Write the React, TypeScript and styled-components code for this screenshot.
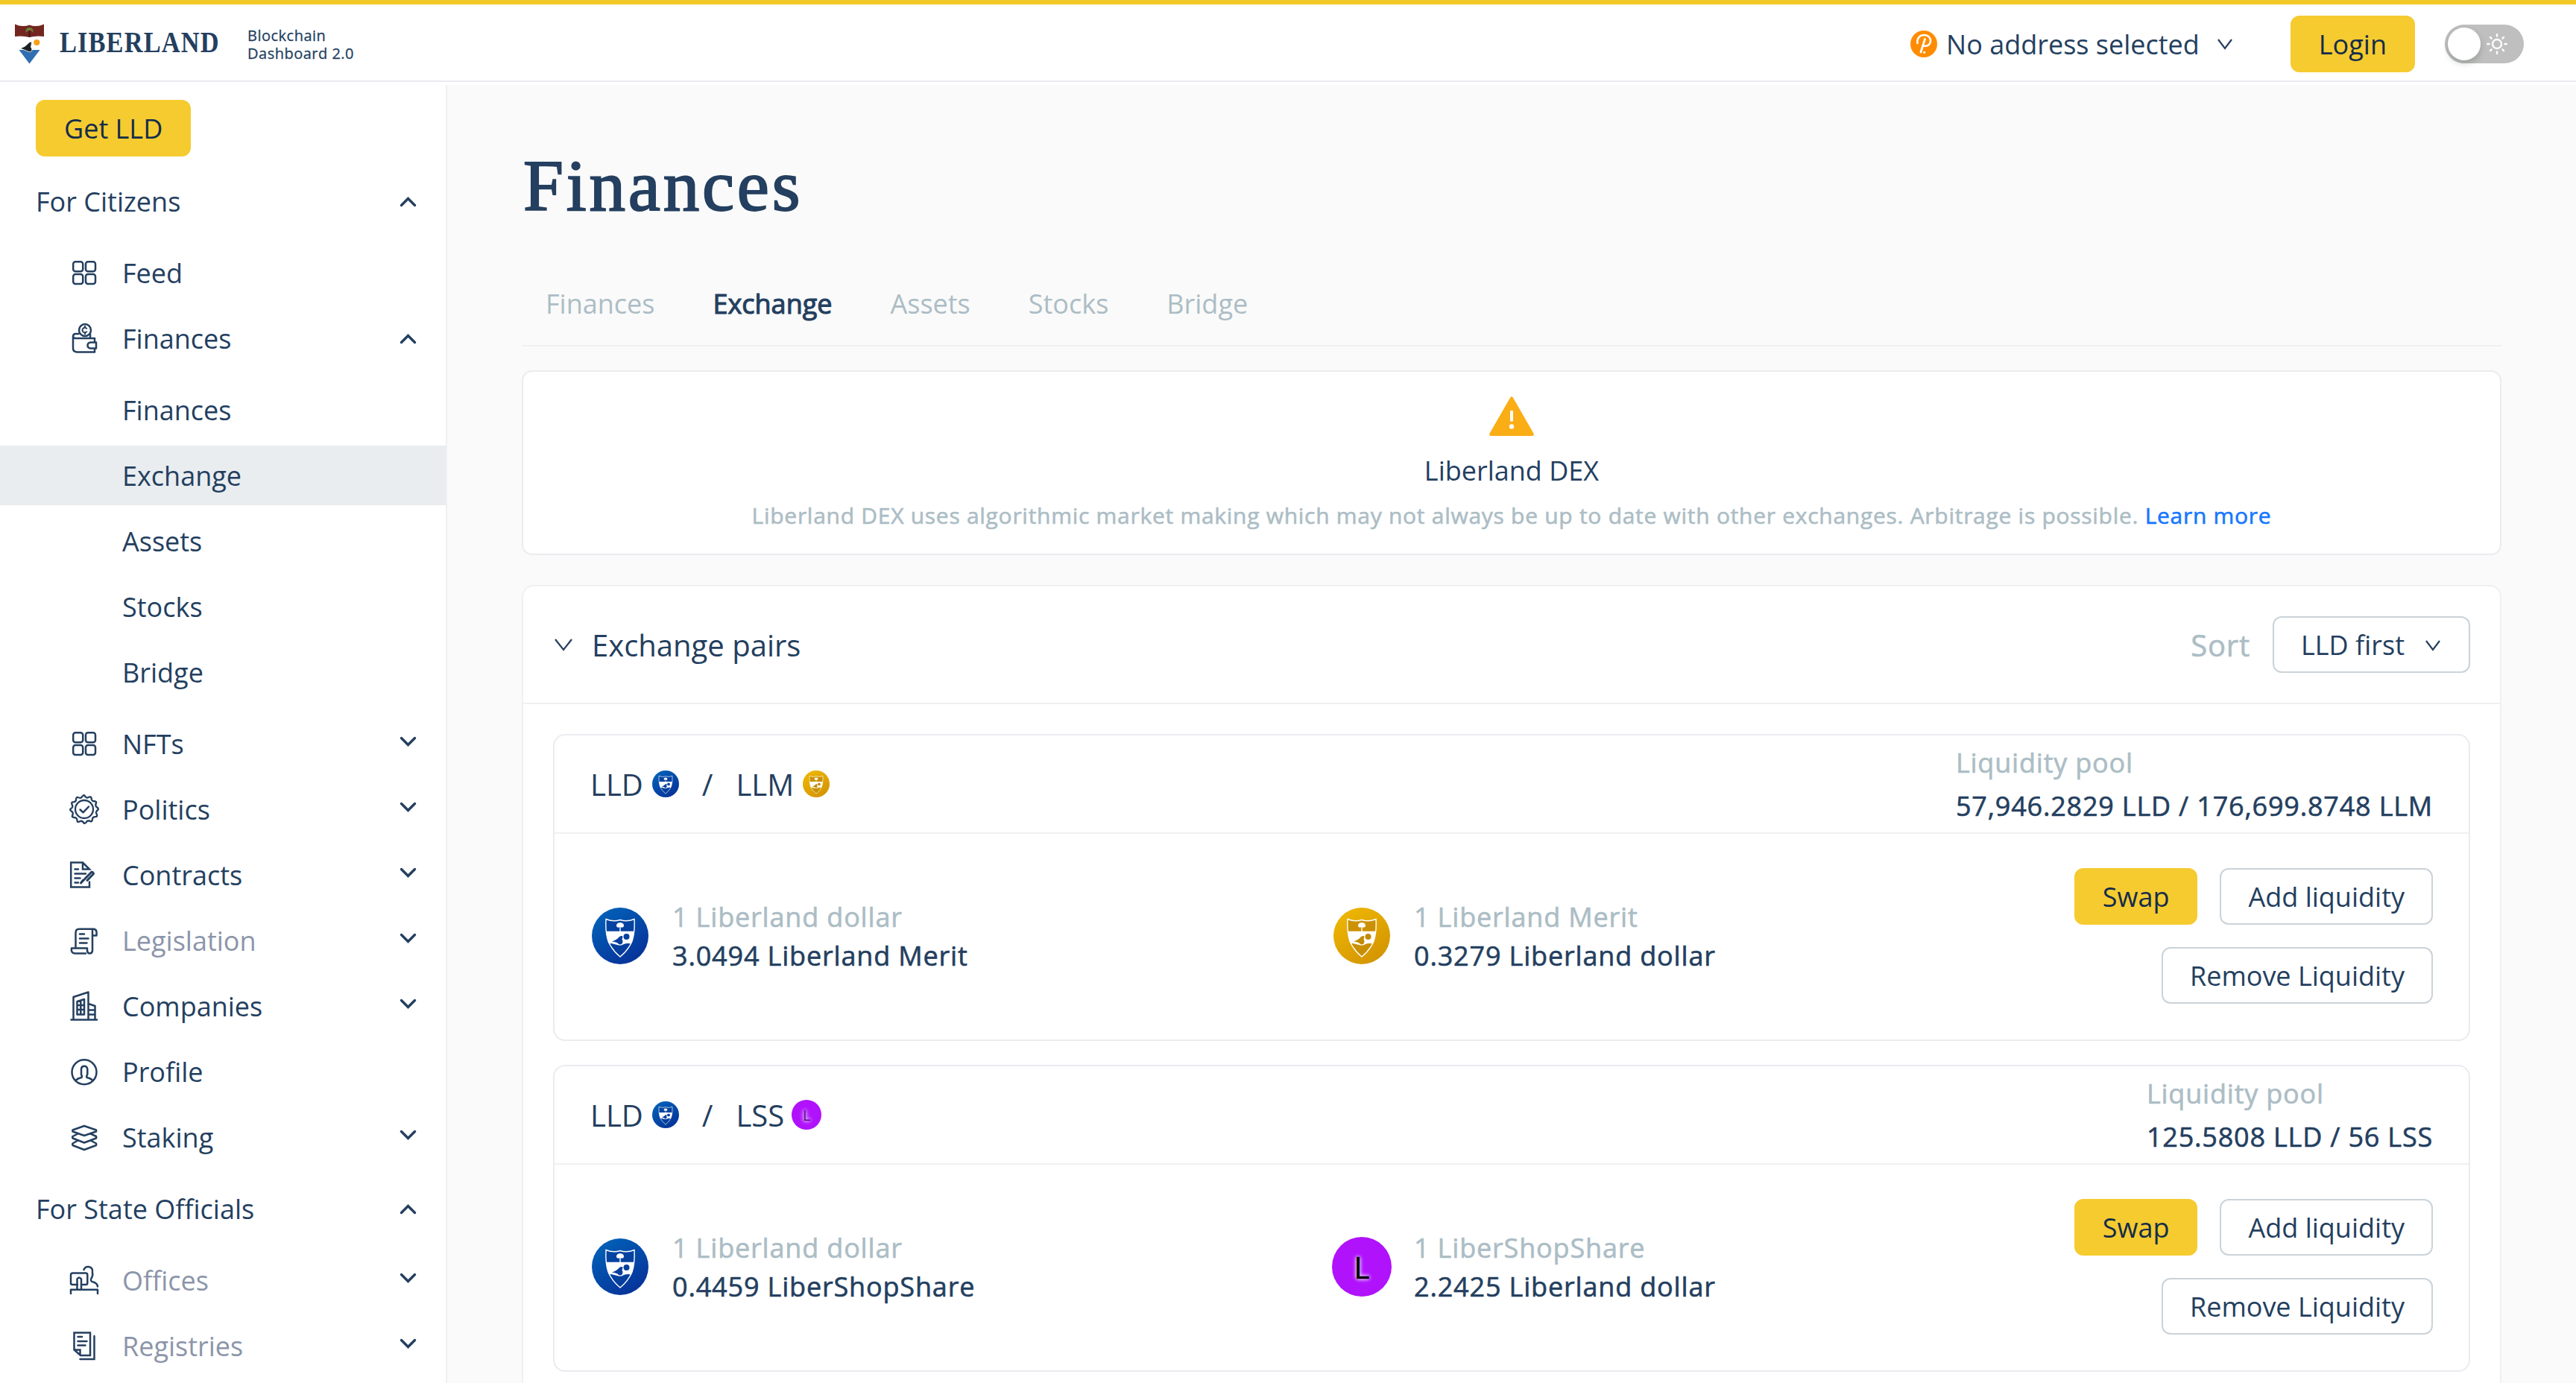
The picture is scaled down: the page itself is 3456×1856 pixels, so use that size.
import React from "react";
import styled, { createGlobalStyle, css } from "styled-components";

const ink = "#243f5f";
const muted = "#acbdc5";
const yellow = "#f5cb30";
const line = "#ebebf0";
const softLine = "#f0f0f0";

const GlobalStyle = createGlobalStyle`
  *, *::before, *::after { box-sizing: border-box; }
  body {
    margin: 0;
    background: #fff;
    color: ${ink};
    font-family: "Open Sans", "Noto Sans", sans-serif;
    font-size: 36px;
    overflow: hidden;
  }
  button { font-family: inherit; cursor: pointer; }
`;

/* Open Sans ships without a medium cut, so the regular one is thickened. */
const medium = css`
  font-weight: 400;
  -webkit-text-stroke: 0.6px currentColor;
`;

const Page = styled.div`
  width: 3456px;
  height: 1856px;
  overflow: hidden;
  display: flex;
  flex-direction: column;
  background: #fff;
`;

/* ---------- header ---------- */

const Header = styled.header`
  flex: none;
  height: 110px;
  border-top: 6px solid #f2ca27;
  border-bottom: 2px solid ${line};
  padding: 4px 70px 0 20px;
  display: flex;
  align-items: center;
  background: #fff;
`;

const Brand = styled.div`
  display: flex;
  align-items: center;
  flex: 1;
`;

const WordmarkSvg = styled.svg`
  margin-left: 20px;
  overflow: visible;
`;

const Tagline = styled.div`
  margin-left: 28px;
  padding-top: 2px;
  font-size: 20px;
  line-height: 24px;
  letter-spacing: 0.5px;
  -webkit-text-stroke: 0.3px currentColor;
`;

const AddressPicker = styled.div`
  display: flex;
  align-items: center;
  gap: 12px;
  margin-right: 78px;
  line-height: 76px;
  svg:last-child { margin-left: 12px; }
`;

const AddressText = styled.span`
  padding-top: 2px;
`;

const Toggle = styled.div`
  margin-left: 40px;
  width: 106px;
  height: 52px;
  border-radius: 26px;
  background: #bfbfbf;
  padding: 4px 22px 4px 4px;
  display: flex;
  align-items: center;
  justify-content: space-between;
`;

const Knob = styled.div`
  width: 44px;
  height: 44px;
  border-radius: 50%;
  background: #fff;
  box-shadow: 0 4px 8px rgba(0, 35, 11, 0.2);
`;

const Button = styled.button<{ $primary?: boolean }>`
  height: 76px;
  padding: 2px 36px 0;
  border: 2px solid #cad3d9;
  border-radius: 12px;
  background: #fff;
  color: ${ink};
  font-size: 36px;
  line-height: 70px;
  display: inline-flex;
  align-items: center;
  justify-content: center;
  white-space: nowrap;
  ${(p) =>
    p.$primary &&
    css`
      background: ${yellow};
      border-color: ${yellow};
      color: #142c4a;
    `}
`;

/* ---------- layout ---------- */

const Body = styled.div`
  flex: 1;
  min-height: 0;
  padding-top: 4px;
  display: flex;
`;

const Sidebar = styled.aside`
  flex: none;
  width: 600px;
  border-right: 2px solid ${softLine};
  background: #fff;
  overflow: hidden;
`;

const SidebarTop = styled.div`
  padding: 20px 48px;
  display: flex;
`;

const MenuList = styled.ul<{ $nested?: boolean }>`
  list-style: none;
  margin: 0;
  padding: 0;
  display: flex;
  flex-direction: column;
  gap: 8px;
  ${(p) => p.$nested && css`padding: 16px 0 8px;`}
`;

const MenuRow = styled.div<{ $level: number; $active?: boolean }>`
  height: 80px;
  display: flex;
  align-items: center;
  padding-right: 40px;
  padding-left: ${(p) => (p.$level === 0 ? 48 : p.$level === 1 ? 93 : 164)}px;
  background: ${(p) => (p.$active ? "#e9edf0" : "transparent")};
`;

const MenuLabel = styled.span<{ $dim?: boolean }>`
  flex: 1;
  white-space: nowrap;
  color: ${(p) => (p.$dim ? "#8c95a9" : ink)};
`;

const MenuIcon = styled.svg`
  flex: none;
  width: 40px;
  height: 40px;
  margin-right: 31px;
  overflow: visible;
  fill: none;
  stroke: ${ink};
  stroke-width: 2.5;
  stroke-linecap: round;
  stroke-linejoin: round;
`;

const MenuArrow = styled.svg<{ $open?: boolean }>`
  flex: none;
  width: 21px;
  height: 12px;
  overflow: visible;
  margin-top: ${(p) => (p.$open ? "2px" : "-6px")};
  fill: none;
  stroke: ${ink};
  stroke-width: 3.4;
  stroke-linecap: round;
`;

const Main = styled.main`
  flex: 1;
  min-width: 0;
  background: #fafafa;
  padding: 78px 100px 0;
`;

const PageTitle = styled.h1`
  margin: 0 0 42px;
  font-family: "Liberation Serif", "Times New Roman", serif;
  font-weight: 400;
  font-size: 97px;
  line-height: 116px;
  letter-spacing: 3.8px;
  -webkit-text-stroke: 2px ${ink};
  padding-left: 2px;
`;

const Tabs = styled.nav`
  height: 115px;
  border-bottom: 2px solid ${softLine};
  padding: 1px 0 0 32px;
  display: flex;
  align-items: center;
  gap: 78px;
  margin-bottom: 32px;
`;

const Tab = styled.a<{ $active?: boolean }>`
  color: ${(p) => (p.$active ? ink : muted)};
  -webkit-text-stroke: ${(p) => (p.$active ? "1.1px currentColor" : "0")};
`;

const Notice = styled.section`
  border: 2px solid ${line};
  border-radius: 14px;
  background: #fff;
  height: 248px;
  padding-top: 33px;
  margin-bottom: 40px;
  display: flex;
  flex-direction: column;
  align-items: center;
`;

const NoticeTitle = styled.div`
  margin-top: 19px;
  line-height: 56px;
`;

const NoticeText = styled.div`
  ${medium}
  margin-top: 8px;
  font-size: 30px;
  line-height: 48px;
  letter-spacing: 0.72px;
  color: ${muted};
  white-space: nowrap;
`;

const Link = styled.a`
  color: #1677ff;
`;

const Panel = styled.section`
  border: 2px solid ${softLine};
  border-radius: 16px;
  background: #fff;
`;

const PanelHeader = styled.div`
  height: 158px;
  border-bottom: 2px solid ${softLine};
  padding: 0 40px 0 42px;
  display: flex;
  align-items: center;
  font-size: 40px;
`;

const PanelTitle = styled.span`
  flex: 1;
  margin-left: 26px;
`;

const SortLabel = styled.span`
  ${medium}
  color: ${muted};
  letter-spacing: 0.8px;
  margin-right: 30px;
`;

const SortValue = styled.span`
  margin-right: 28px;
`;

const SortButton = styled(Button)`
  padding-right: 38px;
`;

const PairList = styled.div`
  padding: 40px;
  display: flex;
  flex-direction: column;
  gap: 32px;
`;

const PairCard = styled.article`
  height: 412px;
  border: 2px solid ${line};
  border-radius: 16px;
`;

const PairHeader = styled.div`
  height: 132px;
  border-bottom: 2px solid ${softLine};
  padding: 0 48px;
  display: flex;
  align-items: center;
  justify-content: space-between;
`;

const PairNames = styled.div`
  display: flex;
  align-items: center;
  font-size: 40px;
`;

const PairName = styled.span<{ $tight?: boolean }>`
  display: flex;
  align-items: center;
  gap: ${(p) => (p.$tight ? 10 : 12)}px;
`;

const Slash = styled.span`
  margin: 0 31px;
`;

const Pool = styled.div`
  ${medium}
  padding-top: 2px;
  line-height: 58px;
  letter-spacing: 0.8px;
`;

const Muted = styled.div`
  color: ${muted};
`;

const PairBody = styled.div`
  height: 274px;
  padding: 0 48px;
  display: flex;
  align-items: center;
`;

const Rate = styled.div`
  ${medium}
  width: 995px;
  display: flex;
  align-items: center;
  gap: 30px;
  line-height: 52px;
  letter-spacing: 0.83px;
`;

const RateText = styled.div`
  padding-top: 2px;
`;

const CoinSlot = styled.div`
  width: 80px;
  height: 80px;
  display: flex;
  align-items: center;
  justify-content: center;
`;

const Actions = styled.div`
  flex: 1;
  display: flex;
  flex-wrap: wrap;
  justify-content: flex-end;
  gap: 30px;
`;

const Letter = styled.div<{ $size: number; $small?: boolean }>`
  width: ${(p) => p.$size}px;
  height: ${(p) => p.$size}px;
  border-radius: 50%;
  background: #b012fb;
  color: ${(p) => (p.$small ? "#5a0a86" : "#000")};
  font-size: ${(p) => (p.$small ? 20 : 40)}px;
  line-height: ${(p) => p.$size + 2}px;
  text-align: center;
  letter-spacing: 0;
  text-shadow: 0 0 4px #fff, 0 0 6px #fff;
`;

/* ---------- drawings ---------- */

const Crest = () => (
  <svg width="40" height="54" viewBox="0 0 40 54">
    <path d="M0 .5Q10 5 19.500 1.500Q29 5 39 .5V17Q29 15.500 19.500 18Q10 15.500 0 17Z" fill="#73261f" />
    <path d="M19.500 18V8" stroke="#2b1a12" strokeWidth="1.600" />
    <path d="M14.500 12Q14 5 19.500 5Q25 5 24.500 12Q22 8 19.500 9Q17 8 14.500 12Z" fill="#5e8a3a" />
    <circle cx="17.500" cy="9.500" r="1" fill="#c33" />
    <circle cx="21.500" cy="8.500" r="1" fill="#c33" />
    <circle cx="29.300" cy="25" r="4.100" fill="#f9a11b" />
    <path d="M5.500 35H33.500L19.500 53.500Z" fill="#2f6fb2" />
    <path d="M7 33Q14 31 18 26Q21 23 22.500 24.500Q22 29 21.500 31Q23 33 23 36Q21 39 17.500 37Q12 34.500 7 33Z" fill="#1c2224" stroke="#fff" strokeWidth=".8" />
  </svg>
);

const Wordmark = () => (
  <WordmarkSvg width="224" height="48" viewBox="0 0 224 48">
    <text
      x="0"
      y="35"
      transform="scale(.85 1)"
      letterSpacing="1.3"
      fontFamily="'Liberation Serif', 'Times New Roman', serif"
      fontWeight="700"
      fontSize="40.500"
      fill={ink}
    >
      LIBERLAND
    </text>
  </WordmarkSvg>
);

const AddressIcon = () => (
  <svg width="36" height="36" viewBox="0 0 36 36">
    <circle cx="18" cy="18" r="18" fill="#ff8c00" />
    <path d="M9.500 17C8.500 10 13 6 18.500 6C24 6 27.500 10 27 14.500C26.500 19 22.500 21.500 18 20.500" fill="none" stroke="#fff" strokeWidth="2.600" strokeLinecap="round" />
    <path d="M19.500 11.500L14 29" stroke="#fff" strokeWidth="2.800" strokeLinecap="round" />
    <circle cx="18.700" cy="29.300" r="1.600" fill="#fff" />
  </svg>
);

const ThinArrow = ({ w = 20, h = 14 }: { w?: number; h?: number }) => (
  <svg width={w} height={h} viewBox={`0 0 ${w} ${h}`} overflow="visible">
    <path d={`M1 1L${w / 2} ${h - 1}L${w - 1} 1`} fill="none" stroke={ink} strokeWidth="2.200" />
  </svg>
);

const Sun = () => (
  <svg width="28" height="28" viewBox="-14 -14 28 28" stroke="#fff" strokeWidth="2.400" strokeLinecap="round" fill="none">
    <circle r="6" />
    {[0, 45, 90, 135, 180, 225, 270, 315].map((a) => (
      <path key={a} d="M0 -10.500V-12.800" transform={`rotate(${a})`} />
    ))}
  </svg>
);

const Warning = () => (
  <svg width="60" height="53" viewBox="0 0 60 53">
    <path d="M28.500 .9Q30 -.6 31.500 .9L59.700 50Q60 52.800 58 53H2Q0 52.800 .3 50Z" fill="#faad14" />
    <rect x="28" y="19" width="4" height="14.500" rx=".6" fill="#fff" />
    <circle cx="30" cy="40.500" r="3.200" fill="#fff" />
  </svg>
);

const ShieldCoin = ({ size, gold }: { size: number; gold?: boolean }) => {
  const id = gold ? "coin-gold" : "coin-blue";
  const mid = gold ? "#c38a06" : "#073f9c";
  return (
    <svg width={size} height={size} viewBox="0 0 76 76">
      <defs>
        <linearGradient id={id} x1="0.150" y1="0" x2="0.850" y2="1">
          <stop offset="0" stopColor={gold ? "#efb805" : "#0163b9"} />
          <stop offset="1" stopColor={gold ? "#d29200" : "#072f97"} />
        </linearGradient>
      </defs>
      <circle cx="38" cy="38" r="38" fill={`url(#${id})`} />
      <path d="M19 15.500Q29 19.500 38 16.500Q47 19.500 57 15.500Q58 33 54 45Q49 57 38 66Q27 57 22 45Q18 33 19 15.500Z" fill={mid} fillOpacity=".75" stroke="#fff" strokeWidth="1.400" />
      <path d="M19.500 31.800H56.500Q56 42 53 48.500Q47 47.500 43 49Q39 52 34 50L26 48L23 48.500Q20 42 19.500 31.800Z" fill="#fff" />
      <path d="M38 32V24" stroke="#fff" strokeWidth="1.400" />
      <path d="M33 25Q32.500 20.500 38 20Q43.500 20.500 43 25Q41.500 28 38 26Q34.500 28 33 25Z" fill="#fff" />
      <circle cx="46.500" cy="39" r="4" fill={mid} />
      <path d="M27 45.500Q34 43 36.500 39.500Q39 37 41.500 38.500L40.500 43Q42.500 45 40.500 48.500Q38 50.500 35.500 48.500Q34 46.500 27 45.500Z" fill={mid} />
    </svg>
  );
};

const icons: Record<string, React.ReactNode> = {
  grid: (
    <>
      <rect x="5.200" y="5.200" width="13" height="13" rx="3" />
      <rect x="22" y="5.200" width="13" height="13" rx="3" />
      <rect x="5.200" y="22" width="13" height="13" rx="3" />
      <rect x="22" y="22" width="13" height="13" rx="3" />
    </>
  ),
  wallet: (
    <>
      <circle cx="21" cy="9" r="8" />
      <path d="M23.300 6.800A3.300 3.300 0 1 0 23.300 11.200M21 3.800V5.500M21 12.500V14.200" strokeWidth="2" />
      <path d="M12.500 14H8Q5 14.500 5 17.500Q5.500 19.800 8 20H34V25M34 34V38.500H10Q5 38 5 33.500V17M28 14.500V19.500" />
      <path d="M36 25.500H28.500Q24.500 26 24.500 29.500Q24.500 33 28.500 33.500H36Z" />
    </>
  ),
  badge: (
    <>
      <path d="M20 1.200Q22.500 5 24.500 4.600Q28 2.800 29.300 3.800Q29.500 8 31.500 9Q35.800 9.200 36.200 10.800Q34.500 15 36 16.500Q39.300 18.700 38.800 20.300Q35.500 23 36 25Q38 28.500 36.500 29.800Q32 30 31.200 32Q31 36.200 29.300 36.500Q25.500 34.800 23.800 36Q21.500 39.500 20 39Q17.500 35.400 15.500 35.800Q12 38 10.700 36.500Q10.500 32 8.500 31.300Q4 31 3.800 29.500Q5.500 25.500 4.300 23.800Q.8 21.500 1.200 20Q5 17.500 4.300 15.500Q2.500 12 3.700 10.600Q8 10.500 8.800 8.500Q9 4 10.700 3.800Q14.500 5.500 16.200 4.300Q18.500 1 20 1.200Z" strokeWidth="2.300" />
      <circle cx="20" cy="20" r="12" strokeWidth="2.300" />
      <path d="M14.500 20.500L18.500 24.300L26 16.500" />
    </>
  ),
  contract: (
    <>
      <path d="M27 29.500V36.500H2.200V3.500H18L27 12.500H18V3.500" strokeLinejoin="miter" />
      <path d="M7.500 12.500H12M7.500 18.500H22M7.500 24.500H14.500M7.500 30.500H12" />
      <path d="M15.500 31L29.500 16.500Q32 15.800 32.500 18.500L24 27.500M15.500 31L18 27.500" strokeWidth="3" />
    </>
  ),
  scroll: (
    <>
      <path d="M8.500 29V10Q8.500 4.800 13 4.800H33Q36.500 5.500 36.500 9V13.500H31.500M31 5V34Q30.500 37.500 27.500 37.500Q24.500 37.500 24 34V30.500H3Q2 37.500 8 37.500H22" />
      <path d="M14 11.500H20M14 17.500H25.500M14 23.500H23.500" />
    </>
  ),
  building: (
    <>
      <path d="M2.500 38.500H37M5.500 38V8L25.500 1.500V38M25.500 17L34.500 20V38M26 25.500H34M26 31.500H34" />
      <path d="M10.500 14L20 11V31.500H10.500ZM10.500 19H20M10.500 25H20M15.300 13V31" />
    </>
  ),
  profile: (
    <>
      <circle cx="20" cy="20.800" r="16.500" />
      <path d="M8.500 32.500Q10 29.500 16.500 28Q17.500 26.500 16 24V16.500Q16.300 12.800 20 12.800Q23.700 12.800 24.300 16.500V24Q22.500 26.500 23.500 28Q30 29.500 31.500 32.500" />
    </>
  ),
  layers: (
    <>
      <path d="M20 5L36 10.500Q36.500 12 36 12.500L20 18L4.500 12.500Q4 11.500 4.500 10.500Z" />
      <path d="M11.500 15.500L4.500 19Q4 20.500 4.500 21.500L20 27.500L36 21.500Q36.500 20.500 36 19L28.500 15.500" />
      <path d="M11.500 24.500L4.500 28.500Q4 30 4.500 31L20 37L36 31Q36.500 30 36 28.500L28.500 24.500" />
    </>
  ),
  desk: (
    <>
      <path d="M11 26H4.500Q2 26 2 24V13Q2 10.500 4.500 10.500H22Q24.300 10.500 24.300 13V24Q24.300 26 22 26H18" />
      <path d="M10.500 32.500V18.500Q13 14.500 16 18.500V32.500M2 38V32.800H38V38M19.500 6Q21 1.500 26 2Q32 3 31 10Q32 14 29.500 17.500Q27.500 21.500 32 22.500Q37.500 24 38 28.500" />
    </>
  ),
  papers: (
    <>
      <path d="M6.500 2.500H28V33H15L6.500 25.500ZM6.500 25.500H14.500V32.500M33.500 7V38H14.500" strokeLinejoin="miter" />
      <path d="M11.500 8H17M11.500 14H23.500M11.500 19.500H21.500" />
    </>
  ),
};

/* ---------- data ---------- */

type Item = { label: string; icon?: string; open?: boolean; arrow?: boolean; dim?: boolean; active?: boolean; children?: Item[] };

const menu: Item[] = [
  {
    label: "For Citizens",
    arrow: true,
    open: true,
    children: [
      { label: "Feed", icon: "grid" },
      {
        label: "Finances",
        icon: "wallet",
        arrow: true,
        open: true,
        children: [
          { label: "Finances" },
          { label: "Exchange", active: true },
          { label: "Assets" },
          { label: "Stocks" },
          { label: "Bridge" },
        ],
      },
      { label: "NFTs", icon: "grid", arrow: true },
      { label: "Politics", icon: "badge", arrow: true },
      { label: "Contracts", icon: "contract", arrow: true },
      { label: "Legislation", icon: "scroll", arrow: true, dim: true },
      { label: "Companies", icon: "building", arrow: true },
      { label: "Profile", icon: "profile" },
      { label: "Staking", icon: "layers", arrow: true },
    ],
  },
  {
    label: "For State Officials",
    arrow: true,
    open: true,
    children: [
      { label: "Offices", icon: "desk", arrow: true, dim: true },
      { label: "Registries", icon: "papers", arrow: true, dim: true },
    ],
  },
];

const pairs = [
  {
    a: "LLD",
    b: "LLM",
    pool: "57,946.2829 LLD / 176,699.8748 LLM",
    rates: [
      ["1 Liberland dollar", "3.0494 Liberland Merit"],
      ["1 Liberland Merit", "0.3279 Liberland dollar"],
    ],
  },
  {
    a: "LLD",
    b: "LSS",
    pool: "125.5808 LLD / 56 LSS",
    rates: [
      ["1 Liberland dollar", "0.4459 LiberShopShare"],
      ["1 LiberShopShare", "2.2425 Liberland dollar"],
    ],
  },
];

const Coin = ({ token, small }: { token: string; small?: boolean }) =>
  token === "LSS" ? (
    <Letter $size={small ? 40 : 80} $small={small}>
      L
    </Letter>
  ) : (
    <ShieldCoin size={small ? 36 : 76} gold={token === "LLM"} />
  );

const Menu = ({ items, level = 0 }: { items: Item[]; level?: number }) => (
  <MenuList $nested={level > 0}>
    {items.map((item) => (
      <li key={item.label}>
        <MenuRow $level={level} $active={item.active}>
          {item.icon && <MenuIcon viewBox="0 0 40 40">{icons[item.icon]}</MenuIcon>}
          <MenuLabel $dim={item.dim}>{item.label}</MenuLabel>
          {item.arrow && (
            <MenuArrow $open={item.open} viewBox="0 0 21 12">
              <path d={item.open ? "M1.500 10.500L10.500 1.500L19.500 10.500" : "M1.500 1.500L10.500 10.500L19.500 1.500"} />
            </MenuArrow>
          )}
        </MenuRow>
        {item.children && <Menu items={item.children} level={level + 1} />}
      </li>
    ))}
  </MenuList>
);

export default function App() {
  return (
    <Page>
      <GlobalStyle />
      <Header>
        <Brand>
          <Crest />
          <Wordmark />
          <Tagline>
            Blockchain
            <br />
            Dashboard 2.0
          </Tagline>
        </Brand>
        <AddressPicker>
          <AddressIcon />
          <AddressText>No address selected</AddressText>
          <ThinArrow />
        </AddressPicker>
        <Button $primary>Login</Button>
        <Toggle>
          <Knob />
          <Sun />
        </Toggle>
      </Header>
      <Body>
        <Sidebar>
          <SidebarTop>
            <Button $primary>Get LLD</Button>
          </SidebarTop>
          <Menu items={menu} />
        </Sidebar>
        <Main>
          <PageTitle>Finances</PageTitle>
          <Tabs>
            {["Finances", "Exchange", "Assets", "Stocks", "Bridge"].map((t) => (
              <Tab key={t} $active={t === "Exchange"}>
                {t}
              </Tab>
            ))}
          </Tabs>
          <Notice>
            <Warning />
            <NoticeTitle>Liberland DEX</NoticeTitle>
            <NoticeText>
              Liberland DEX uses algorithmic market making which may not always be up to date with other exchanges.
              Arbitrage is possible. <Link>Learn more</Link>
            </NoticeText>
          </Notice>
          <Panel>
            <PanelHeader>
              <ThinArrow w={24} h={16} />
              <PanelTitle>Exchange pairs</PanelTitle>
              <SortLabel>Sort</SortLabel>
              <SortButton>
                <SortValue>LLD first</SortValue>
                <ThinArrow />
              </SortButton>
            </PanelHeader>
            <PairList>
              {pairs.map((p) => (
                <PairCard key={p.b}>
                  <PairHeader>
                    <PairNames>
                      <PairName>
                        {p.a}
                        <Coin token={p.a} small />
                      </PairName>
                      <Slash>/</Slash>
                      <PairName $tight={p.b === "LSS"}>
                        {p.b}
                        <Coin token={p.b} small />
                      </PairName>
                    </PairNames>
                    <Pool>
                      <Muted>Liquidity pool</Muted>
                      <div>{p.pool}</div>
                    </Pool>
                  </PairHeader>
                  <PairBody>
                    {p.rates.map(([one, value], i) => (
                      <Rate key={one}>
                        <CoinSlot>
                          <Coin token={i === 0 ? p.a : p.b} />
                        </CoinSlot>
                        <RateText>
                          <Muted>{one}</Muted>
                          <div>{value}</div>
                        </RateText>
                      </Rate>
                    ))}
                    <Actions>
                      <Button $primary>Swap</Button>
                      <Button>Add liquidity</Button>
                      <Button>Remove Liquidity</Button>
                    </Actions>
                  </PairBody>
                </PairCard>
              ))}
            </PairList>
          </Panel>
        </Main>
      </Body>
    </Page>
  );
}
